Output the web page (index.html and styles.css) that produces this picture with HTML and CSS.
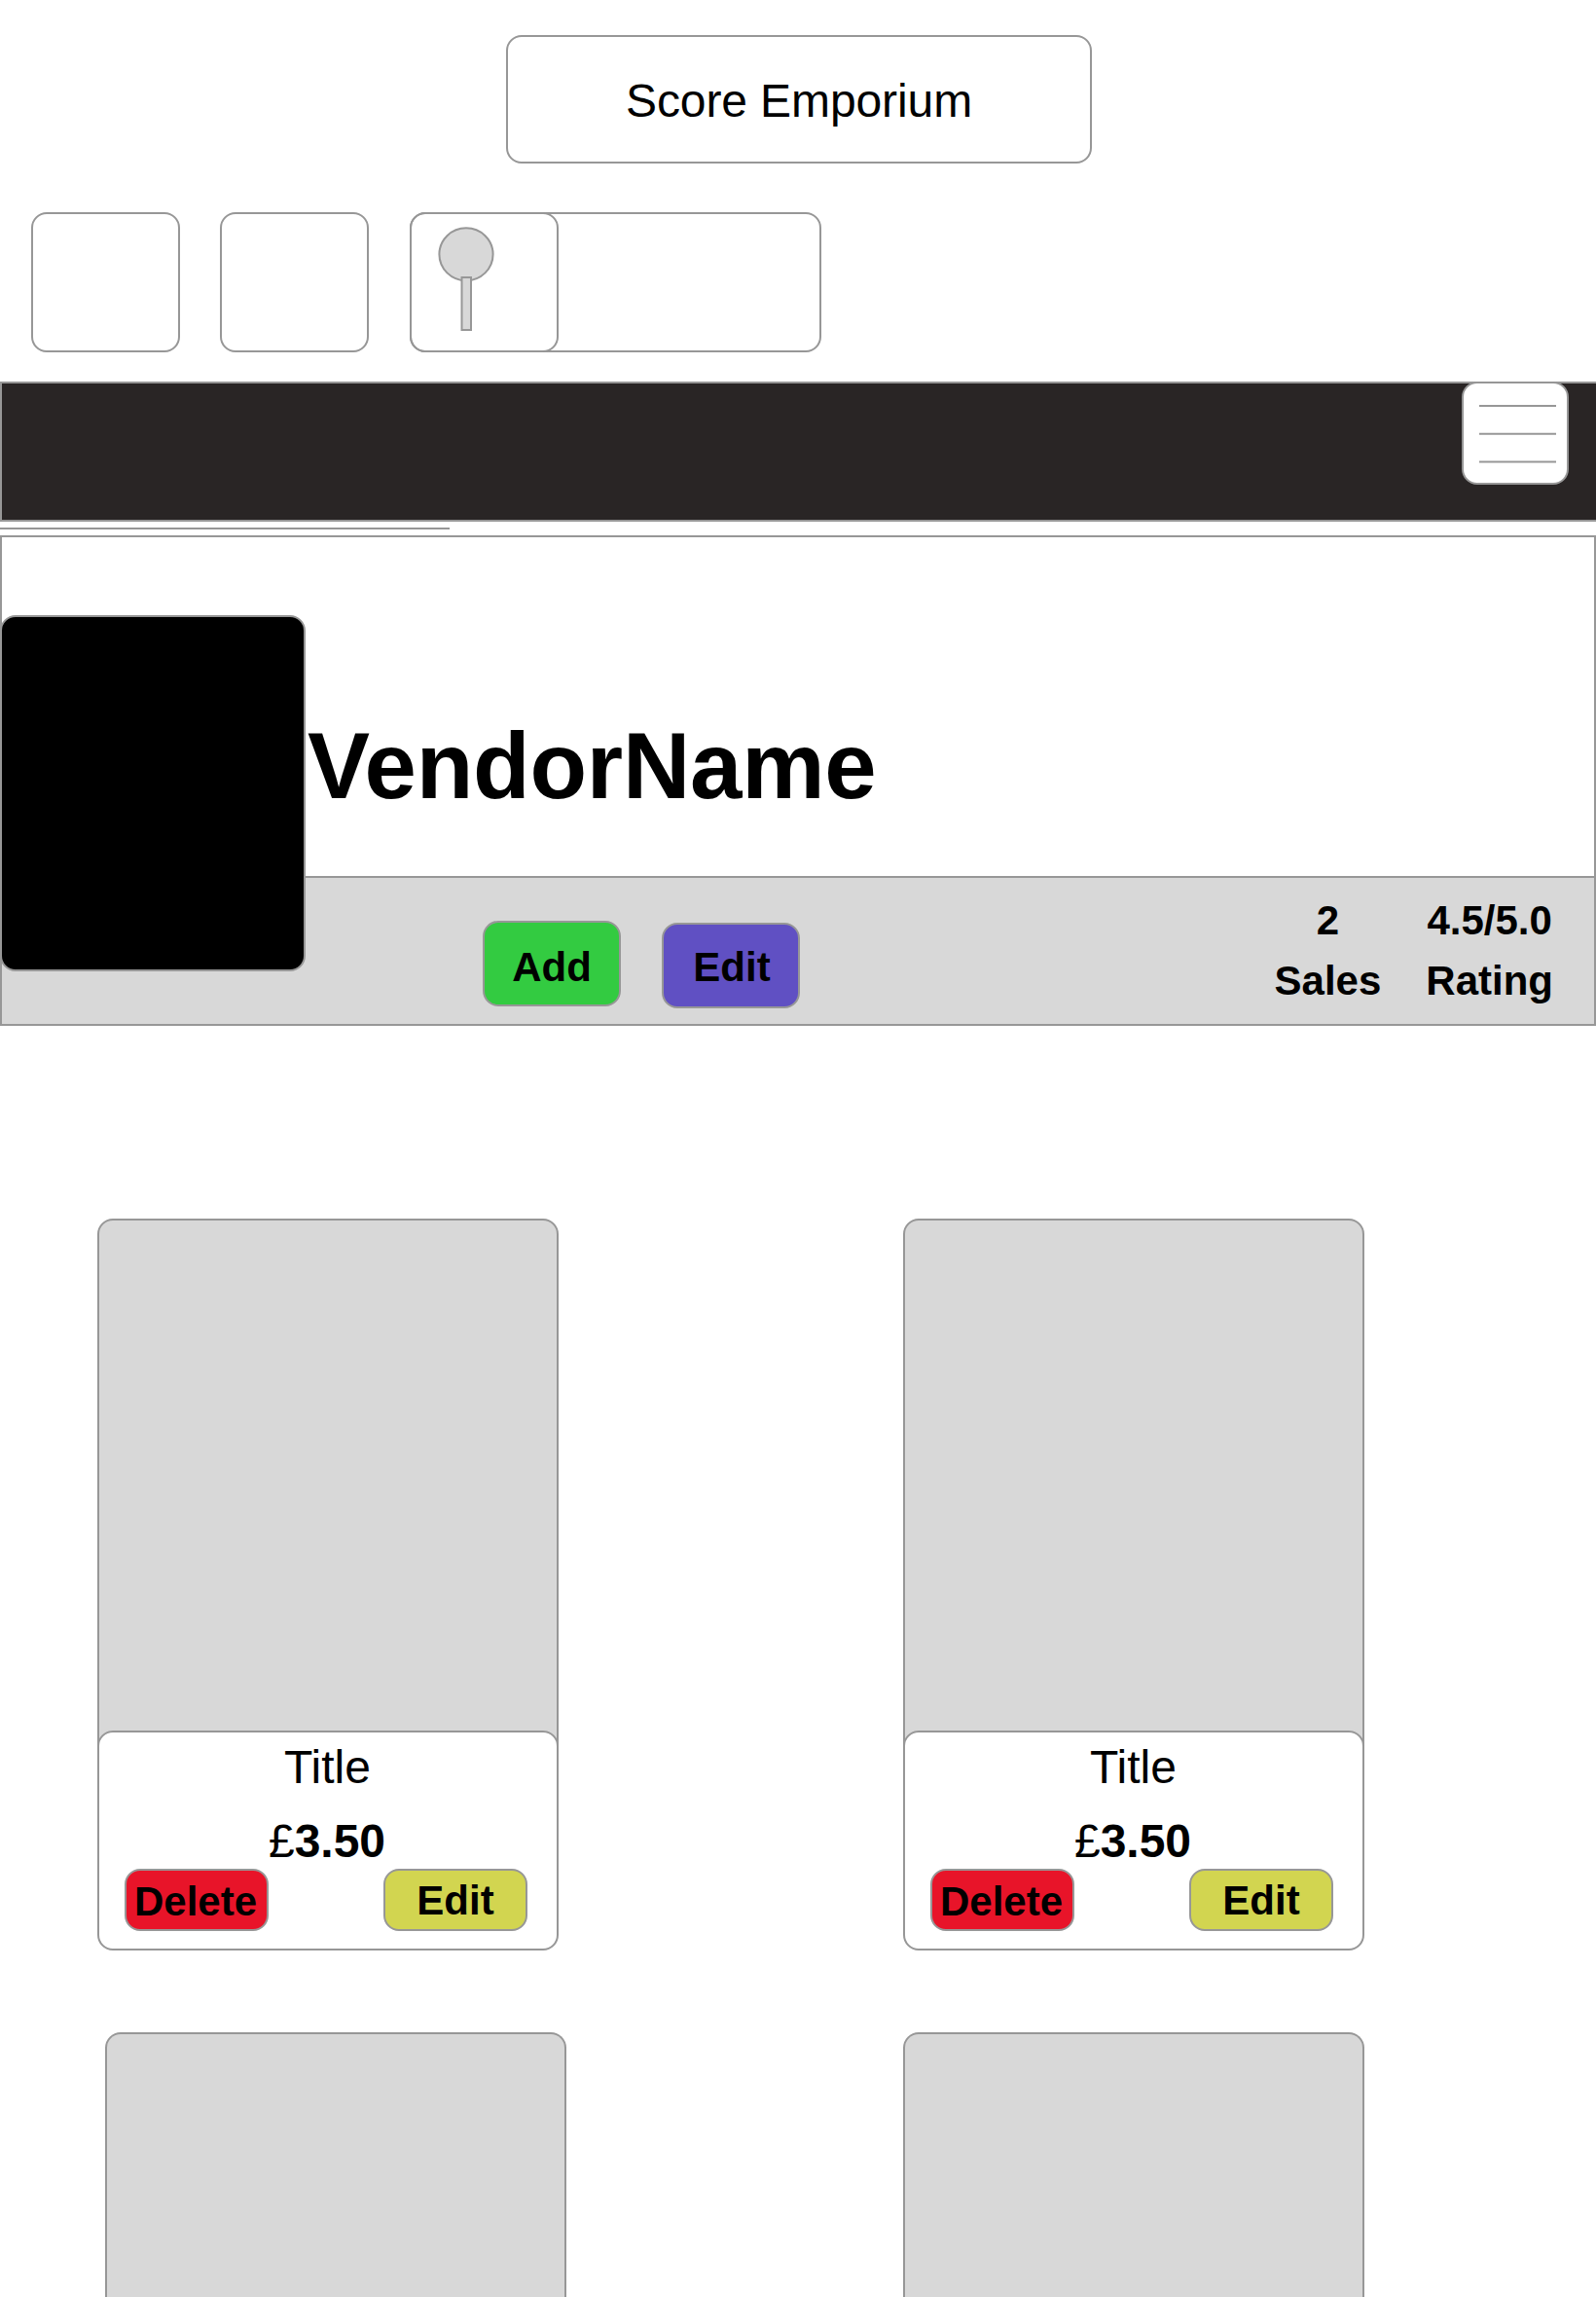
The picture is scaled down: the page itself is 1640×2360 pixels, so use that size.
FILE: index.html
```html
<!DOCTYPE html>
<html lang="en">
<head>
<meta charset="utf-8">
<title>Score Emporium</title>
<link rel="stylesheet" href="styles.css">
</head>
<body>
<header class="header">
  <h1 class="brand">Score Emporium</h1>
  <div class="tools">
    <div class="tool"></div>
    <div class="tool"></div>
    <div class="search">
      <div class="search-button">
        <svg class="search-icon" width="58" height="108" viewBox="0 0 58 108">
          <ellipse cx="29" cy="28.3" rx="27.6" ry="27"/>
          <rect x="24.5" y="52" width="9.5" height="54"/>
        </svg>
      </div>
    </div>
  </div>
</header>
<nav class="nav">
  <button class="menu">
    <svg class="menu-icon" width="79" height="62" viewBox="0 0 79 62">
      <path d="M0 3H79M0 31.8H79M0 60.6H79"/>
    </svg>
  </button>
</nav>
<div class="rule"></div>
<section class="vendor">
  <div class="vendor-top"><h2 class="vendor-name">VendorName</h2></div>
  <div class="vendor-bar">
    <div class="actions">
      <button class="btn add">Add</button>
      <button class="btn edit">Edit</button>
    </div>
    <div class="stats">
      <div class="stat"><span>2</span><span>Sales</span></div>
      <div class="stat"><span>4.5/5.0</span><span>Rating</span></div>
    </div>
  </div>
  <div class="avatar"></div>
</section>
<main class="products">
  <div class="row">
    <article class="card">
      <div class="cover"></div>
      <div class="info">
        <h3 class="title">Title</h3>
        <p class="price"><span class="currency">£</span>3.50</p>
        <div class="card-actions">
          <button class="btn small delete">Delete</button>
          <button class="btn small modify">Edit</button>
        </div>
      </div>
    </article>
    <article class="card">
      <div class="cover"></div>
      <div class="info">
        <h3 class="title">Title</h3>
        <p class="price"><span class="currency">£</span>3.50</p>
        <div class="card-actions">
          <button class="btn small delete">Delete</button>
          <button class="btn small modify">Edit</button>
        </div>
      </div>
    </article>
  </div>
  <div class="row row-next">
    <article class="card"><div class="cover cover-cut"></div></article>
    <article class="card"><div class="cover cover-cut"></div></article>
  </div>
</main>
</body>
</html>
```
FILE: styles.css
```css
* {
  box-sizing: border-box;
  margin: 0;
  padding: 0;
}

body {
  width: 1640px;
  background: #fff;
  color: #000;
  font-family: "Liberation Sans", Arial, Helvetica, sans-serif;
}

button {
  font: inherit;
  color: inherit;
}

.header {
  height: 392px;
  padding-top: 36px;
}

.brand {
  width: 602px;
  height: 132px;
  margin-left: 520px;
  padding-top: 2px;
  border: 2px solid #979797;
  border-radius: 16px;
  font-size: 48px;
  font-weight: 400;
  line-height: 128px;
  letter-spacing: -0.1px;
  text-align: center;
}

.tools {
  display: flex;
  gap: 41px;
  margin-top: 50px;
  padding-left: 32px;
}

.tool,
.search {
  height: 144px;
  border: 2px solid #979797;
  border-radius: 16px;
}

.tool {
  width: 153px;
}

.search {
  width: 423px;
  margin-left: 1px;
}

.search-button {
  width: 153px;
  height: 144px;
  margin: -2px;
  padding: 13px 0 0 27px;
  border: 2px solid #979797;
  border-radius: 16px;
}

.search-icon {
  display: block;
  fill: #d8d8d8;
  stroke: #979797;
  stroke-width: 2;
}

.nav {
  display: flex;
  justify-content: flex-end;
  height: 144px;
  padding-right: 28px;
  border: 2px solid #979797;
  border-right: 0;
  background: #292525;
}

.menu {
  display: flex;
  width: 110px;
  height: 106px;
  margin-top: -2px;
  padding: 20px 0 0 16px;
  border: 2px solid #979797;
  border-radius: 16px;
  background: #fff;
}

.menu-icon {
  display: block;
  fill: none;
  stroke: #979797;
  stroke-width: 2;
}

.rule {
  width: 462px;
  height: 2px;
  margin: 6px 0;
  background: #979797;
}

.vendor {
  position: relative;
}

.vendor-top {
  height: 350px;
  padding: 185px 0 0 314px;
  border: 2px solid #979797;
  border-bottom: 0;
}

.vendor-name {
  font-size: 96px;
  line-height: 100px;
  letter-spacing: -0.25px;
}

.vendor-bar {
  display: flex;
  justify-content: space-between;
  height: 154px;
  padding: 13px 42px 0 494px;
  border: 2px solid #979797;
  background: #d8d8d8;
}

/* The portrait lies over both halves of the vendor banner. */
.avatar {
  position: absolute;
  top: 82px;
  left: 0;
  width: 314px;
  height: 366px;
  border: 2px solid #979797;
  border-radius: 16px;
  background: #000;
}

.actions {
  display: flex;
  gap: 42px;
  padding-top: 31px;
}

.btn {
  width: 142px;
  height: 88px;
  border: 2px solid #979797;
  border-radius: 16px;
  font-size: 42px;
  font-weight: 700;
  line-height: 1;
}

.add {
  padding-top: 7px;
  background: #33cb41;
}

.edit {
  margin-top: 2px;
  padding: 3px 0 0 2px;
  background: #6050c3;
}

.stats {
  display: flex;
  gap: 46px;
  font-size: 42px;
  font-weight: 700;
  line-height: 62px;
}

.stat {
  display: flex;
  flex-direction: column;
  align-items: center;
}

.row {
  display: flex;
  gap: 354px;
  padding: 198px 0 0 100px;
}

.row-next {
  gap: 346px;
  padding: 84px 0 0 108px;
}

.card {
  width: 474px;
}

.cover {
  height: 560px;
  border: 2px solid #979797;
  border-radius: 16px;
  background: #d8d8d8;
}

.cover-cut {
  height: 272px;
  border-bottom: 0;
  border-radius: 16px 16px 0 0;
}

.info {
  height: 226px;
  margin-top: -34px;
  padding-top: 6px;
  border: 2px solid #979797;
  border-radius: 16px;
  background: #fff;
  text-align: center;
}

.title {
  padding-right: 1px;
  font-size: 48px;
  font-weight: 400;
  line-height: 60px;
}

.price {
  padding-right: 2px;
  margin: 18px 0 0;
  font-size: 48px;
  font-weight: 700;
  line-height: 56px;
}

.currency {
  font-weight: 400;
}

.card-actions {
  display: flex;
  justify-content: space-between;
  padding: 0 30px 0 26px;
}

.small {
  width: 148px;
  height: 64px;
}

.delete {
  padding: 3px 2px 0 0;
  background: #e81429;
}

.modify {
  padding-top: 1px;
  background: #d2d550;
}
```
